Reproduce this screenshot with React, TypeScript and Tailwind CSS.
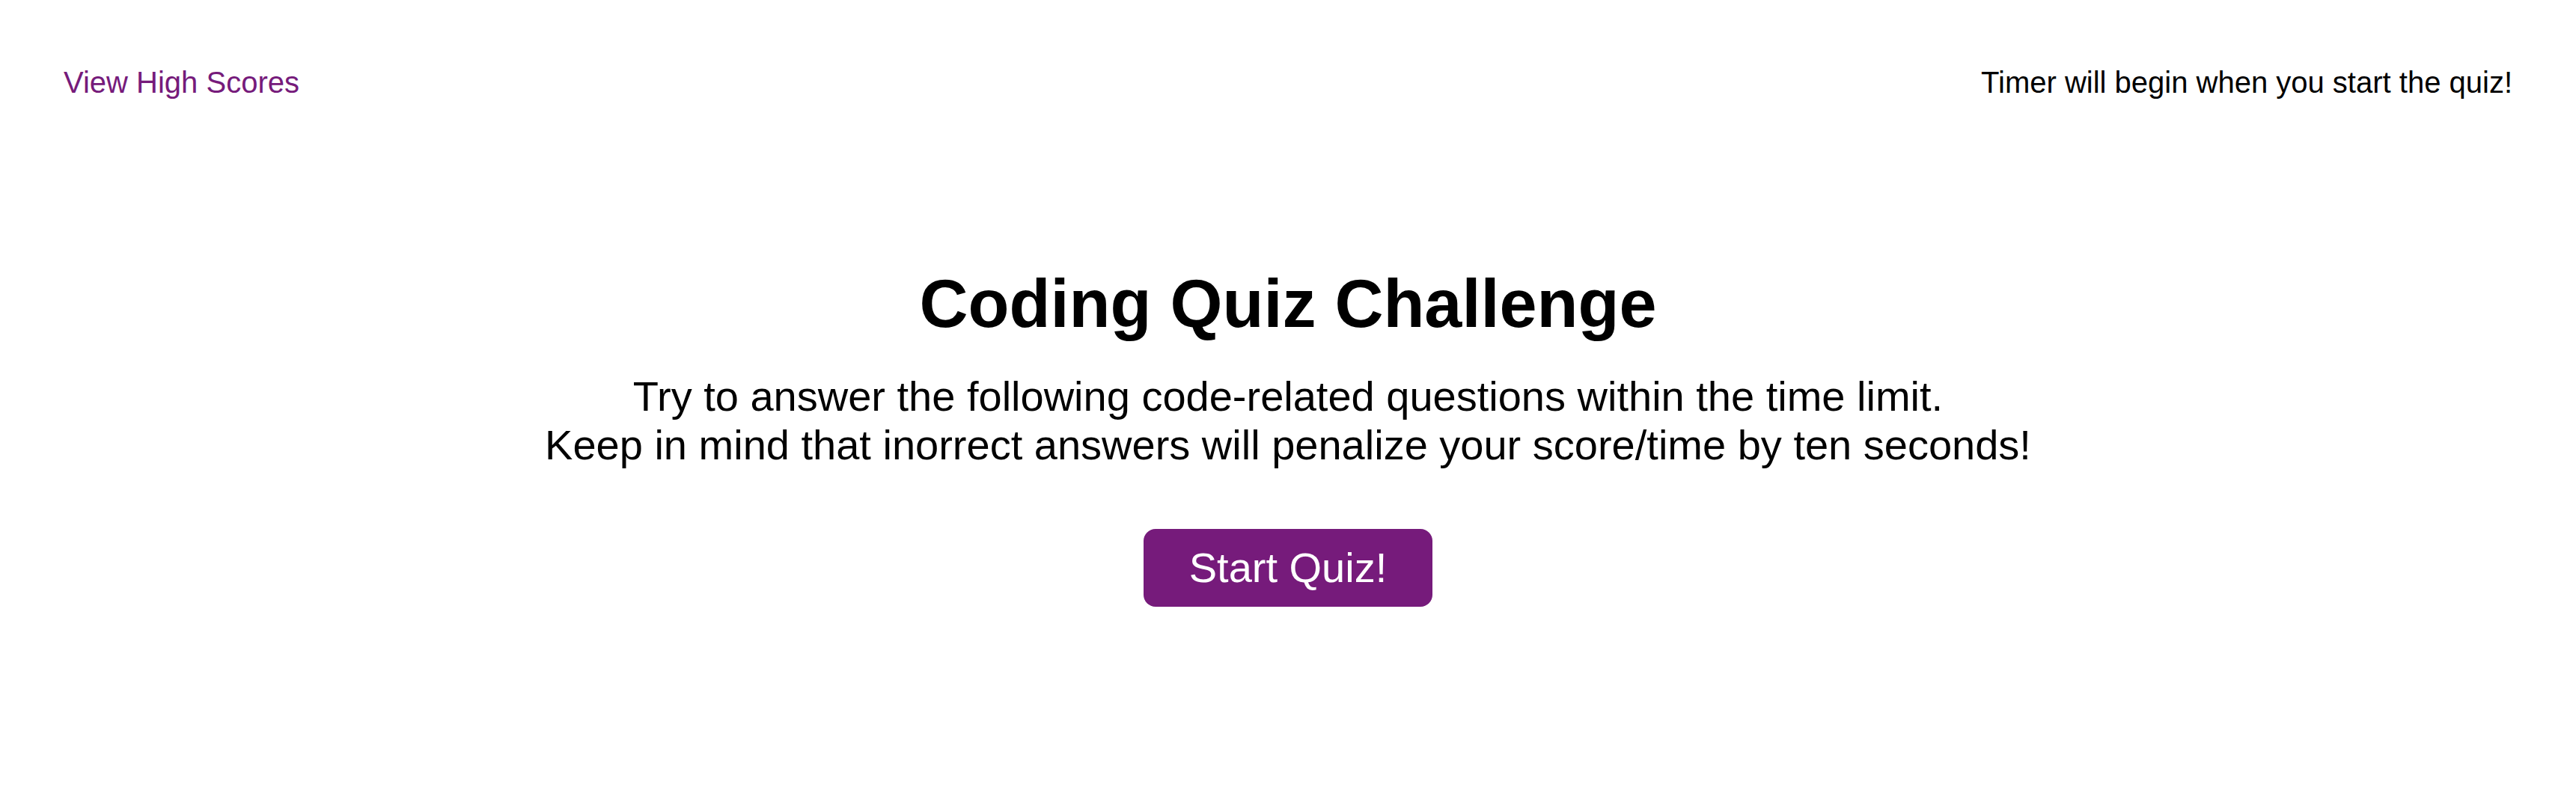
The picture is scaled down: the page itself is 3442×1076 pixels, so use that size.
import React from "react";

export default function App() {
    return (
        <div className="min-h-screen bg-white text-black leading-[1.149] font-['Liberation_Sans',Arial,sans-serif]">
            <header className="flex justify-between items-start px-[85px] pt-[88px] text-[40px] leading-[1.149]">
                <a href="#" className="text-[#761b7b]">View High Scores</a>
                <p>Timer will begin when you start the quiz!</p>
            </header>
            <main className="flex flex-col items-center text-center mt-[221px]">
                <h1 className="text-[90px] font-bold leading-[1.149]">Coding Quiz Challenge</h1>
                <p className="mt-[40px] text-[56px] leading-[1.149]">
                    Try to answer the following code-related questions within the time limit.
                    <br />
                    Keep in mind that inorrect answers will penalize your score/time by ten seconds!
                </p>
                <button className="mt-[80px] bg-[#761b7b] text-white text-[56px] leading-[1.149] px-[61px] py-[20px] rounded-[16px]">
                    Start Quiz!
                </button>
            </main>
        </div>
    );
}
